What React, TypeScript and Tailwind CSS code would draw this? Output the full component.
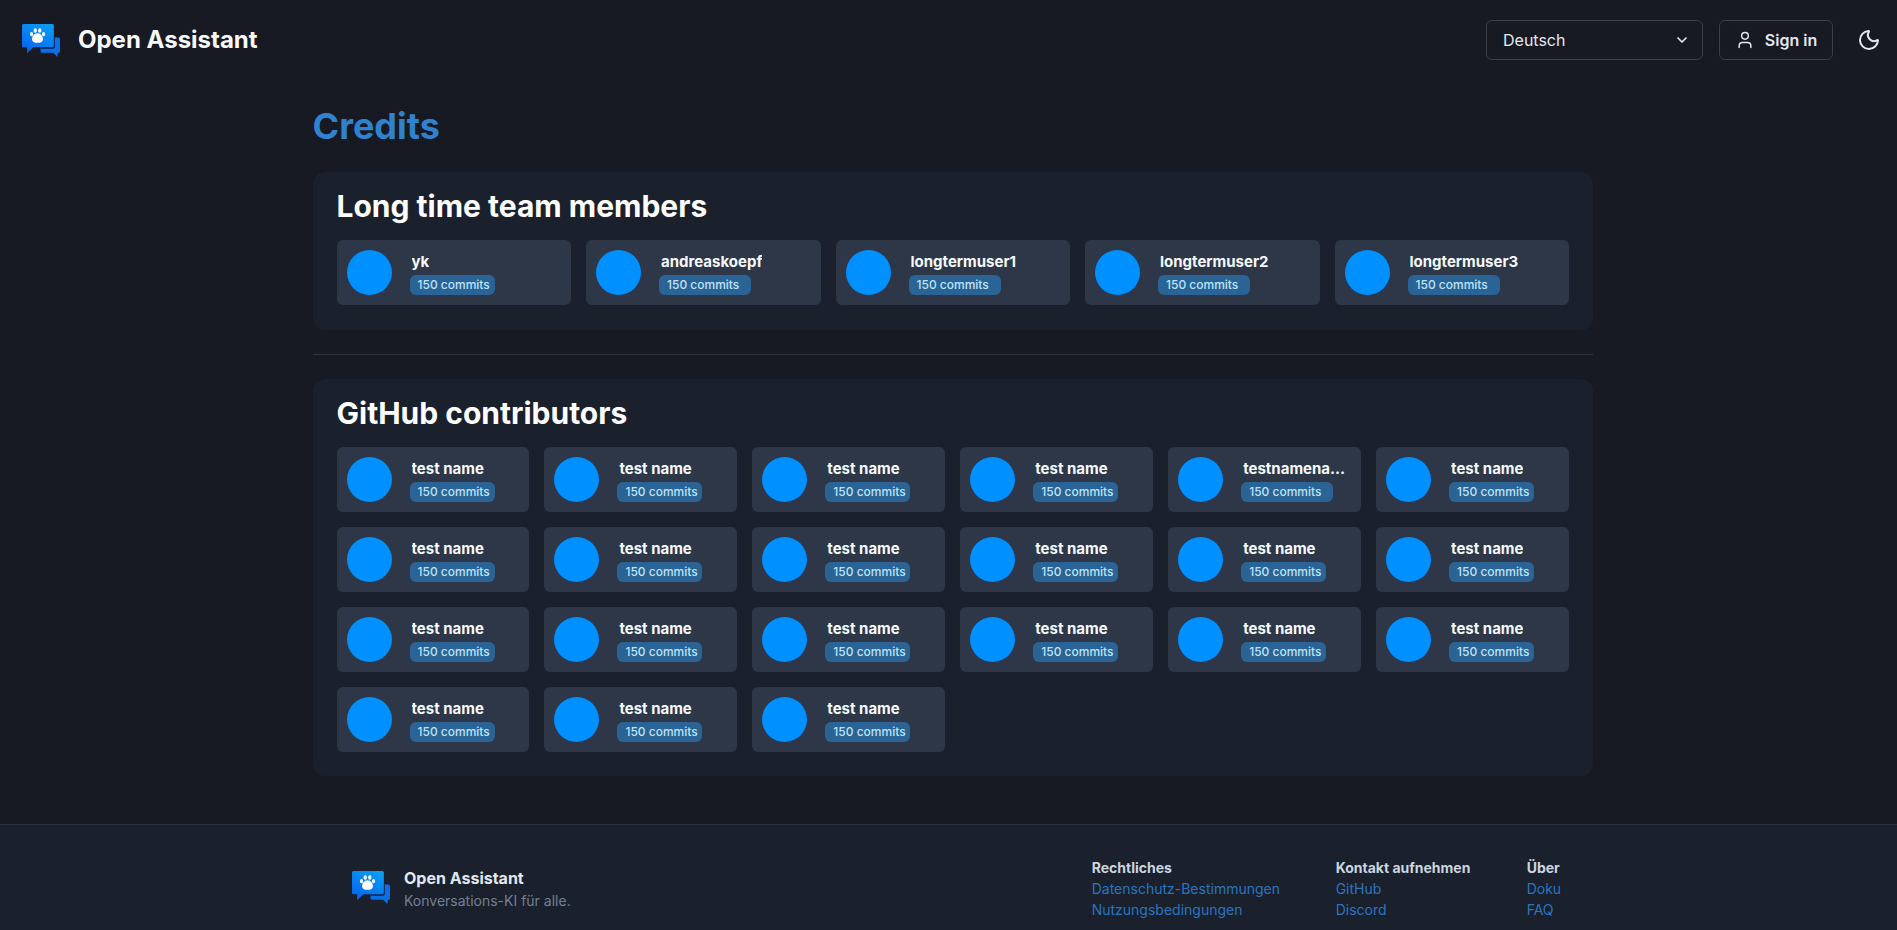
import { ChevronDown, Moon, User } from "lucide-react";

function Logo() {
  return (
    <svg width="38" height="33" viewBox="0 0 37 32" className="shrink-0">
      <defs>
        <linearGradient id="oa1" x1="0.75" y1="0" x2="0.25" y2="1">
          <stop offset="0" stopColor="#0a9cf5" />
          <stop offset="1" stopColor="#0463ee" />
        </linearGradient>
      </defs>
      <path d="M20 13h15.5a1.5 1.5 0 0 1 1.5 1.5v12a1.5 1.5 0 0 1-1.5 1.5H35l-.6 4-4-4H19.5a1.5 1.5 0 0 1-1.5-1.5V23z" fill="#0b6fe8" />
      <path d="M1.5 0h28A1.5 1.5 0 0 1 31 1.500v19.500a1.500 1.500 0 0 1-1.500 1.500H11l-6 6v-6H1.500A1.500 1.500 0 0 1 0 21V1.500A1.500 1.500 0 0 1 1.500 0z" fill="url(#oa1)" />
      <path d="M18 22.500h11.500A1.500 1.500 0 0 0 31 21v-8h1v9a2 2 0 0 1-2 2H18z" fill="#10214a" />
      <g fill="#fff">
        <ellipse cx="9.300" cy="9.800" rx="1.500" ry="2" />
        <ellipse cx="12.900" cy="6.200" rx="1.600" ry="2.200" />
        <ellipse cx="17.300" cy="6.200" rx="1.600" ry="2.200" />
        <ellipse cx="21" cy="9.800" rx="1.500" ry="2" />
        <path d="M15.100 9c3.300 0 5.300 3.200 5.300 5.700 0 2.400-1.800 3.600-5.300 3.600s-5.300-1.200-5.300-3.600C9.800 12.200 11.800 9 15.100 9z" />
      </g>
    </svg>
  );
}

function Contributor({ name, wide, clamp }: { name: string; wide?: boolean; clamp?: boolean }) {
  return (
    <div className="flex h-[65px] min-w-0 items-center rounded-md bg-[#2d3748] pl-2.5 pr-2.5">
      <div className="h-[45px] w-[45px] shrink-0 rounded-full bg-[#0090ff]" />
      <div className="ml-[18px] flex min-w-0 flex-col items-start">
        <div
          className={`ml-0.5 h-[25px] truncate text-[15px] leading-[24px] font-bold text-[#f7fafc] ${
            clamp ? "max-w-[104px]" : ""
          }`}
        >
          {name}
        </div>
        <div
          className={`h-5 rounded-md bg-[#2a6496] pl-2 text-left text-xs leading-5 font-medium text-[#bee3f8] ${
            wide ? "w-[92px]" : "w-[85px]"
          }`}
        >
          150 commits
        </div>
      </div>
    </div>
  );
}

const team = ["yk", "andreaskoepf", "longtermuser1", "longtermuser2", "longtermuser3"];
const contributors = Array.from({ length: 21 }, (_, i) => (i === 4 ? "testnamenamename" : "test name"));

function FooterColumn({ title, links }: { title: string; links: string[] }) {
  return (
    <div className="flex flex-col text-sm leading-[21px]">
      <div className="font-bold text-[#cbd5e0]">{title}</div>
      {links.map((l) => (
        <a key={l} className="text-[#2b75c0]">
          {l}
        </a>
      ))}
    </div>
  );
}

export default function App() {
  return (
    <div
      className="flex min-h-[930px] flex-col bg-[#171923] text-white"
      style={{ fontFamily: "Inter, sans-serif" }}
    >
      <header className="flex h-20 items-center justify-between pl-[22px] pr-4">
        <div className="flex items-center gap-[18px]">
          <Logo />
          <span className="text-2xl font-bold text-[#f7fafc]">Open Assistant</span>
        </div>
        <div className="flex items-center">
          <div className="flex h-10 w-[217px] items-center justify-between rounded-md border border-[#3a3f4b] pl-4 pr-3 text-base text-[#e2e8f0]">
            Deutsch
            <ChevronDown size={16} strokeWidth={2.5} />
          </div>
          <div className="ml-4 flex h-10 w-[114px] items-center justify-center gap-2.5 rounded-md border border-[#3a3f4b] text-base font-semibold text-[#e2e8f0]">
            <User size={20} strokeWidth={1.75} />
            Sign in
          </div>
          <Moon size={24} strokeWidth={2} className="ml-6 text-[#e2e8f0]" />
        </div>
      </header>

      <main className="ml-[312.5px] w-[1280.5px] flex-1">
        <h1 className="mt-7 mb-7 h-9 text-4xl leading-[36px] font-bold text-[#3182ce]">Credits</h1>
        <section className="rounded-xl bg-[#1a202c] px-6 pt-4 pb-[25px]">
          <h2 className="mb-4 text-3xl leading-9 font-bold text-white">Long time team members</h2>
          <div className="grid grid-cols-5 gap-[15px]">
            {team.map((n, i) => (
              <Contributor key={n} name={n} wide={i > 0} />
            ))}
          </div>
        </section>
        <div className="my-6 h-px bg-[#2f333d]" />
        <section className="rounded-xl bg-[#1a202c] px-6 pt-4 pb-6">
          <h2 className="mb-4 text-3xl leading-9 font-bold text-white">GitHub contributors</h2>
          <div className="grid grid-cols-6 gap-[15px]">
            {contributors.map((n, i) => (
              <Contributor key={i} name={n} wide={i === 4} clamp />
            ))}
          </div>
        </section>
      </main>

      <footer className="mt-12 flex h-[106px] items-start border-t border-[#2f333d] bg-[#1a202c] pl-[352px]">
        <div className="mt-[41px] flex items-center gap-[14px]">
          <div className="mb-[3px]">
            <Logo />
          </div>
          <div className="flex flex-col">
            <span className="text-base leading-[24px] font-bold text-[#e2e8f0]">Open Assistant</span>
            <span className="text-sm leading-[21px] text-[#718096]">Konversations-KI für alle.</span>
          </div>
        </div>
        <div className="ml-[521px] mt-8 flex">
          <div className="w-[244px]">
            <FooterColumn title="Rechtliches" links={["Datenschutz-Bestimmungen", "Nutzungsbedingungen"]} />
          </div>
          <div className="w-[191px]">
            <FooterColumn title="Kontakt aufnehmen" links={["GitHub", "Discord"]} />
          </div>
          <FooterColumn title="Über" links={["Doku", "FAQ"]} />
        </div>
      </footer>
    </div>
  );
}
